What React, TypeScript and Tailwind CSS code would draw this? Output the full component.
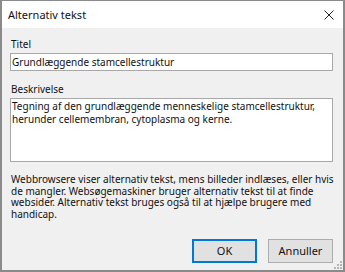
import * as React from "react";

const font = "font-['Segoe_UI','Noto_Sans',sans-serif]";

export default function App() {
  return (
    <div
      className={`relative flex h-[272px] w-[345px] flex-col border-t border-l-2 border-r-2 border-b-2 border-[#8a8a8a] bg-[#f0f0f0] text-[#111] ${font}`}
    >
      {/* Title bar */}
      <div className="flex h-[27px] items-center justify-between bg-white pl-[6px] pr-[8px]">
        <span className="text-[11px] leading-[14px]">Alternativ tekst</span>
        <svg width="10" height="10" viewBox="0 0 10 10" className="mr-[1px]">
          <path d="M0.5 0.5 L9.5 9.5 M9.5 0.5 L0.5 9.5" stroke="#222" strokeWidth="1" />
        </svg>
      </div>

      {/* Body */}
      <div className="flex flex-1 flex-col pl-[8px] pr-[10px] pt-[9px] text-[10px]">
        <label className="h-[14px] pl-[1px] leading-[14px]">Titel</label>
        <input
          readOnly
          defaultValue="Grundlæggende stamcellestruktur"
          className="mt-[2px] h-[18px] w-full border border-[#a8a8a8] bg-white px-[1px] leading-[16px] outline-none"
        />

        <label className="mt-[11px] h-[14px] pl-[1px] leading-[14px]">Beskrivelse</label>
        <textarea
          readOnly
          defaultValue={"Tegning af den grundlæggende menneskelige stamcellestruktur,\nherunder cellemembran, cytoplasma og kerne."}
          className="mt-[2px] h-[64px] w-full resize-none overflow-hidden border border-[#a8a8a8] bg-white px-[1px] pt-[1px] leading-[13px] outline-none"
        />

        <p className="mt-[12px] whitespace-nowrap pl-[1px] leading-[11.7px]">
          Webbrowsere viser alternativ tekst, mens billeder indlæses, eller hvis
          <br />
          de mangler. Websøgemaskiner bruger alternativ tekst til at finde
          <br />
          websider. Alternativ tekst bruges også til at hjælpe brugere med
          <br />
          handicap.
        </p>

        <div className="mt-auto mb-[7px] flex justify-end gap-[11px]">
          <button className="flex h-[24px] w-[65px] items-center justify-center border-2 border-[#0078d7] bg-[#e1e1e1] text-[11px]">
            OK
          </button>
          <button className="flex h-[24px] w-[65px] items-center justify-center border border-[#adadad] bg-[#e1e1e1] text-[11px]">
            Annuller
          </button>
        </div>
      </div>

      {/* Resize grip */}
      <svg width="8" height="8" viewBox="0 0 8 8" className="absolute bottom-[1px] right-[1px]">
        <rect x="6" y="0" width="2" height="2" fill="#b5b5b5" />
        <rect x="3" y="3" width="2" height="2" fill="#b5b5b5" />
        <rect x="6" y="3" width="2" height="2" fill="#b5b5b5" />
        <rect x="0" y="6" width="2" height="2" fill="#b5b5b5" />
        <rect x="3" y="6" width="2" height="2" fill="#b5b5b5" />
        <rect x="6" y="6" width="2" height="2" fill="#b5b5b5" />
      </svg>
    </div>
  );
}
